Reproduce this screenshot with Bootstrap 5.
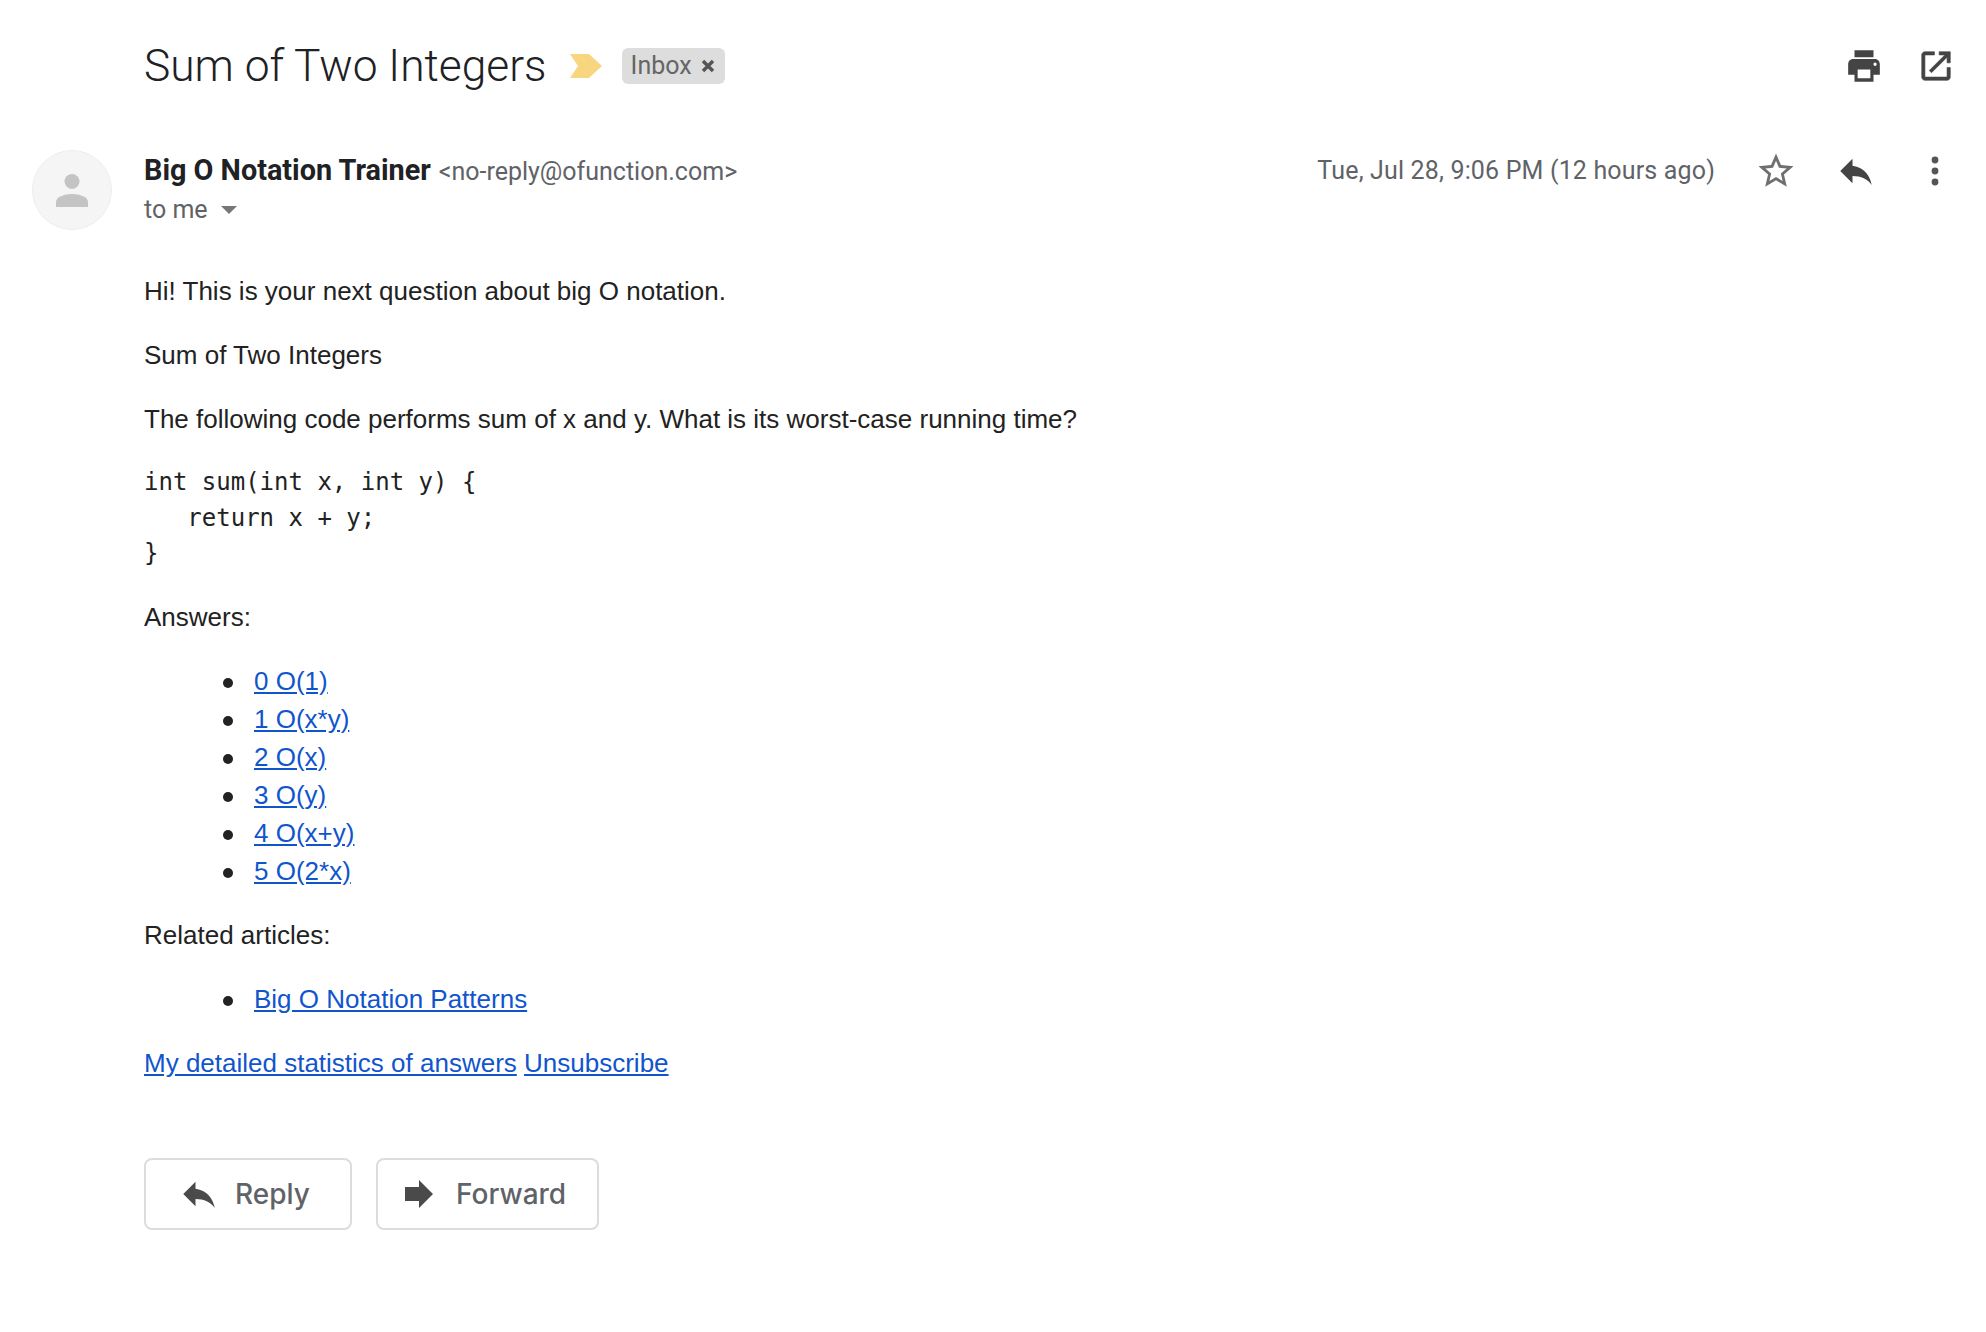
<!DOCTYPE html>
<html lang="en">
<head>
<meta charset="utf-8">
<title>Sum of Two Integers</title>
<link rel="stylesheet" href="https://cdn.jsdelivr.net/npm/bootstrap@5.3.0/dist/css/bootstrap.min.css">
<style>
body{background:#fff;font-family:"Liberation Sans",Arial,sans-serif;color:#222;}
.mail-page{padding:34px 0 0 0;}
.subject-row{padding:0 31px 0 144px;height:64px;}
.subject{font-family:Roboto,sans-serif;font-weight:300;font-size:44.3px;line-height:64px;color:#202124;margin:0;}
.label-arrow{margin-left:23px;margin-right:20px;}
.inbox-chip{background:#ddd;border-radius:6px;height:36px;padding:0 10px 0 9px;font-family:Roboto,sans-serif;font-size:25px;color:#666;gap:9px;}
.subject-tools{gap:34px;}
.head-row{padding:52px 39px 0 32px;}
.avatar-disc{width:80px;height:80px;border-radius:50%;background:#f5f5f5;border:1px solid #eee;flex:none;margin-right:32px;}
.sender-block{padding-top:1px;}
.sender-name{font-family:Roboto,sans-serif;font-weight:700;font-size:28.8px;line-height:38px;color:#202124;}
.sender-mail{font-family:Roboto,sans-serif;font-size:25px;line-height:38px;color:#5f6368;margin-left:8px;}
.to-me{font-family:Roboto,sans-serif;font-size:25px;line-height:38px;color:#5f6368;gap:13px;}
.when{font-family:Roboto,sans-serif;font-size:25px;line-height:38px;color:#5f6368;letter-spacing:.16px;}
.star-icon{margin-left:40px;}
.reply-icon{margin-left:38px;}
.dots-icon{margin-left:46px;}
.msg-body{padding:42px 32px 0 144px;font-size:26px;line-height:38px;color:#222;}
.msg-body p{margin:0 0 26px;}
.msg-body a{color:#1155cc;text-decoration:underline;}
.msg-body ul{margin:0 0 26px;padding-left:110px;list-style:none;}
.msg-body li::before{content:"";display:inline-block;width:10px;height:10px;border-radius:50%;background:#222;margin-left:-31px;margin-right:21px;vertical-align:middle;}
.code-block{font-family:"DejaVu Sans Mono",monospace;font-size:24px;line-height:35.5px;white-space:pre;margin:27px 0 26px;color:#222;overflow:visible;}
.msg-body p.before-code{margin-bottom:0;}
.action-row{padding:50px 0 0 144px;gap:24px;}
.mail-btn{height:72px;border:2px solid #dadce0;border-radius:8px;background:#fff;font-family:Inter,sans-serif;font-weight:500;font-size:28px;color:#5f6368;}
.btn-reply{width:208px;padding:0 0 0 32px;gap:15px;}
.btn-forward{width:223px;padding:0 0 0 20px;gap:16px;}
</style>
</head>
<body>
<div class="mail-page">
  <div class="subject-row d-flex align-items-center">
    <h1 class="subject">Sum of Two Integers</h1>
    <svg class="label-arrow" width="32" height="24" viewBox="0 0 32 24"><path d="M0 0H19L32 12L19 24H0L8 12Z" fill="#f8d680"/></svg>
    <span class="inbox-chip d-inline-flex align-items-center">Inbox
      <svg width="14" height="14" viewBox="0 0 14 14"><path d="M2 2L12 12M12 2L2 12" stroke="#555" stroke-width="3.4"/></svg>
    </span>
    <div class="subject-tools ms-auto d-flex align-items-center">
      <svg width="38" height="42" viewBox="0 0 24 24" preserveAspectRatio="none"><path fill="#444" d="M19 8H5c-1.66 0-3 1.34-3 3v6h4v4h12v-4h4v-6c0-1.66-1.34-3-3-3zm-3 11H8v-5h8v5zm3-7c-.55 0-1-.45-1-1s.45-1 1-1 1 .45 1 1-.45 1-1 1zm-1-9H6v4h12V3z"/></svg>
      <svg width="38" height="38" viewBox="0 0 24 24"><path fill="#444" stroke="#444" stroke-width=".4" d="M19 19H5V5h6V3H5c-1.1 0-2 .9-2 2v14c0 1.1.9 2 2 2h14c1.1 0 2-.9 2-2v-6h-2v6zM14 3v2h3.59l-9.83 9.83 1.41 1.41L19 6.41V10h2V3h-7z"/></svg>
    </div>
  </div>

  <div class="head-row d-flex align-items-start">
    <div class="avatar-disc d-flex align-items-center justify-content-center">
      <svg width="32" height="33" viewBox="0 0 32 33"><circle cx="16" cy="7.5" r="7.5" fill="#c4c4c4"/><path d="M0 33V28C0 23 8 20 16 20S32 23 32 28V33Z" fill="#c4c4c4"/></svg>
    </div>
    <div class="sender-block flex-grow-1">
      <div><span class="sender-name">Big O Notation Trainer</span><span class="sender-mail">&lt;no-reply@ofunction.com&gt;</span></div>
      <div class="to-me d-flex align-items-center">to me
        <svg width="16" height="8" viewBox="0 0 16 8"><path d="M0 0H16L8 8Z" fill="#777"/></svg>
      </div>
    </div>
    <div class="d-flex align-items-center">
      <span class="when">Tue, Jul 28, 9:06 PM (12 hours ago)</span>
      <svg class="star-icon" width="42" height="42" viewBox="0 0 24 24"><path fill="#6f6f6f" d="M22 9.24l-7.19-.62L12 2 9.19 8.63 2 9.24l5.46 4.73L5.82 21 12 17.27 18.18 21l-1.63-7.03L22 9.24zM12 15.4l-3.76 2.27 1-4.28-3.32-2.88 4.38-.38L12 6.1l1.71 4.04 4.38.38-3.32 2.88 1 4.28L12 15.4z"/></svg>
      <svg class="reply-icon" width="42" height="42" viewBox="0 0 24 24"><path fill="#444" d="M10 9V5l-7 7 7 7v-4.1c5 0 8.5 1.6 11 5.1-1-5-4-10-11-11z"/></svg>
      <svg class="dots-icon" width="24" height="36" viewBox="0 0 24 36"><circle cx="12" cy="7" r="3.4" fill="#555"/><circle cx="12" cy="18" r="3.4" fill="#555"/><circle cx="12" cy="29" r="3.4" fill="#555"/></svg>
    </div>
  </div>

  <div class="msg-body">
    <p>Hi! This is your next question about big O notation.</p>
    <p>Sum of Two Integers</p>
    <p class="before-code">The following code performs sum of x and y. What is its worst-case running time?</p>
    <pre class="code-block">int sum(int x, int y) {
   return x + y;
}</pre>
    <p>Answers:</p>
    <ul>
      <li><a href="#">0 O(1)</a></li>
      <li><a href="#">1 O(x*y)</a></li>
      <li><a href="#">2 O(x)</a></li>
      <li><a href="#">3 O(y)</a></li>
      <li><a href="#">4 O(x+y)</a></li>
      <li><a href="#">5 O(2*x)</a></li>
    </ul>
    <p>Related articles:</p>
    <ul>
      <li><a href="#">Big O Notation Patterns</a></li>
    </ul>
    <p><a href="#">My detailed statistics of answers</a> <a href="#">Unsubscribe</a></p>
  </div>

  <div class="action-row d-flex">
    <button type="button" class="btn mail-btn btn-reply d-flex align-items-center">
      <svg width="42" height="42" viewBox="0 0 24 24"><path fill="#4a4a4a" d="M10 9V5l-7 7 7 7v-4.1c5 0 8.5 1.6 11 5.1-1-5-4-10-11-11z"/></svg>Reply
    </button>
    <button type="button" class="btn mail-btn btn-forward d-flex align-items-center">
      <svg width="42" height="42" viewBox="0 0 24 24"><path fill="#4a4a4a" d="M12 8V4l8 8-8 8v-4H4V8z"/></svg>Forward
    </button>
  </div>
</div>
<script src="https://cdn.jsdelivr.net/npm/bootstrap@5.3.0/dist/js/bootstrap.bundle.min.js"></script>
</body>
</html>
